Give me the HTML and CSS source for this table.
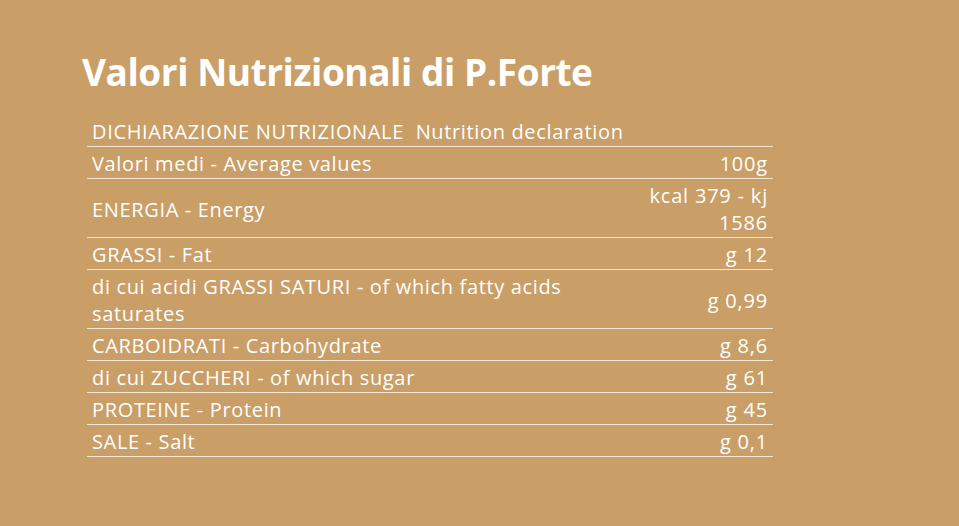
FILE: index.html
```html
<!DOCTYPE html>
<html lang="it">
<head>
<meta charset="utf-8">
<title>Valori Nutrizionali di P.Forte</title>
<link rel="stylesheet" href="styles.css">
</head>
<body>
<main class="page">
  <h1 class="title">Valori Nutrizionali di P.Forte</h1>
  <table class="nutri">
    <tbody>
      <tr class="head"><td colspan="2">DICHIARAZIONE NUTRIZIONALE&nbsp; Nutrition declaration</td></tr>
      <tr><td class="label">Valori medi - Average values</td><td class="val">100g</td></tr>
      <tr><td class="label">ENERGIA - Energy</td><td class="val">kcal 379 - kj 1586</td></tr>
      <tr><td class="label">GRASSI - Fat</td><td class="val">g 12</td></tr>
      <tr><td class="label">di cui acidi GRASSI SATURI - of which fatty acids saturates</td><td class="val">g 0,99</td></tr>
      <tr><td class="label">CARBOIDRATI - Carbohydrate</td><td class="val">g 8,6</td></tr>
      <tr><td class="label">di cui ZUCCHERI - of which sugar</td><td class="val">g 61</td></tr>
      <tr><td class="label">PROTEINE - Protein</td><td class="val">g 45</td></tr>
      <tr><td class="label">SALE - Salt</td><td class="val">g 0,1</td></tr>
    </tbody>
  </table>
</main>
</body>
</html>
```
FILE: styles.css
```css
html, body {
  margin: 0;
  padding: 0;
  background: #c99e67;
  height: 100%;
}
body {
  font-family: "Open Sans", "DejaVu Sans", sans-serif;
  color: #ffffff;
}
.page {
  padding: 46px 0 0 82px;
}
.title {
  margin: 0 0 17px 0;
  font-size: 37px;
  font-weight: 700;
  line-height: 52px;
  letter-spacing: -0.45px;
}
.nutri {
  margin-left: 5px;
  width: 686px;
  border-collapse: collapse;
  font-size: 20px;
  line-height: 27px;
  letter-spacing: 0.65px;
}
.nutri td {
  padding: 3px 5px 1px 5px;
  border-bottom: 1px solid rgba(255, 255, 255, 0.75);
  vertical-align: middle;
}
.label {
  width: 540px;
}
.val {
  text-align: right;
  letter-spacing: 0.8px;
}
```
